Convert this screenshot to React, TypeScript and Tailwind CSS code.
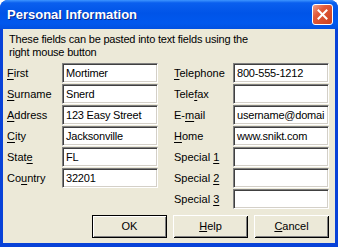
import React from "react";

const font = { fontFamily: '"Liberation Sans", Arial, sans-serif' };

function Field({ value }: { value?: string }) {
  return (
    <div className="h-[20px] w-[96px] border-t border-l border-t-[#808080] border-l-[#808080] border-b border-r border-b-white border-r-white shadow-[inset_1px_1px_0_#404040,inset_-1px_-1px_0_#d4d0c8] bg-white pl-[3px] pr-[2px] overflow-hidden whitespace-nowrap text-[11px] tracking-[-0.2px] leading-[18px] text-black">
      {value}
    </div>
  );
}

function Label({ pre, u, post, w }: { pre?: string; u: string; post?: string; w: string }) {
  return (
    <div className={`${w} text-[11px] leading-[20px] text-black whitespace-nowrap`}>
      {pre}
      <u className="underline-offset-[2px]">{u}</u>
      {post}
    </div>
  );
}

function Btn({ children, def }: { children: React.ReactNode; def?: boolean }) {
  return (
    <div
      className={
        "w-[75px] h-[23px] flex items-center justify-center text-[11px] text-black bg-[#ece9d8] " +
        (def
          ? "border border-black shadow-[inset_1px_1px_0_#fff,inset_-1px_-1px_0_#808080]"
          : "shadow-[inset_1px_1px_0_#fff,inset_-1px_-1px_0_#000,inset_2px_2px_0_#ece9d8,inset_-2px_-2px_0_#808080]")
      }
    >
      {children}
    </div>
  );
}

export default function App() {
  const left: [string | undefined, string, string | undefined, string][] = [
    [undefined, "F", "irst", "Mortimer"],
    [undefined, "S", "urname", "Snerd"],
    [undefined, "A", "ddress", "123 Easy Street"],
    [undefined, "C", "ity", "Jacksonville"],
    ["Stat", "e", undefined, "FL"],
    ["Co", "u", "ntry", "32201"],
  ];
  const right: [string | undefined, string, string | undefined, string][] = [
    [undefined, "T", "elephone", "800-555-1212"],
    ["Tele", "f", "ax", ""],
    ["E-", "m", "ail", "username@domai"],
    [undefined, "H", "ome", "www.snikt.com"],
    ["Special ", "1", undefined, ""],
    ["Special ", "2", undefined, ""],
    ["Special ", "3", undefined, ""],
  ];
  return (
    <div className="w-[338px] h-[247px] bg-white" style={font}>
      <div className="w-[338px] h-[247px] rounded-t-[8px] bg-[#0842d8] flex flex-col overflow-hidden">
        <div className="h-[29px] flex items-center justify-between pl-[7px] pr-[5px] bg-[linear-gradient(to_bottom,#3d95ff_0%,#0a5fee_10%,#0054e8_45%,#0058ee_80%,#0150e0_100%)]">
          <div className="text-white font-bold text-[13px] [text-shadow:1px_1px_0_#0a2a90]">Personal Information</div>
          <div className="w-[21px] h-[21px] rounded-[3px] border border-white bg-[linear-gradient(135deg,#f0a08a_0%,#e25a3a_35%,#c9401f_100%)] flex items-center justify-center">
            <svg width="11" height="11" viewBox="0 0 11 11">
              <path d="M1.5 1.5 L9.5 9.5 M9.5 1.5 L1.5 9.5" stroke="white" strokeWidth="2" strokeLinecap="square" />
            </svg>
          </div>
        </div>
        <div className="flex-1 mx-[3px] mb-[4px] bg-[#ece9d8] flex flex-col">
          <div className="pl-[6px] pt-[4px] text-[11px] tracking-[-0.2px] leading-[13px] text-black">
            These fields can be pasted into text fields using the
            <br />
            right mouse button
          </div>
          <div className="flex mt-[4px] pl-[4px]">
            <div className="flex flex-col gap-[1px]">
              {left.map(([a, b, c, v], i) => (
                <div key={i} className="flex items-center">
                  <Label pre={a} u={b} post={c} w="w-[55px]" />
                  <Field value={v} />
                </div>
              ))}
            </div>
            <div className="flex flex-col gap-[1px] ml-[16px]">
              {right.map(([a, b, c, v], i) => (
                <div key={i} className="flex items-center">
                  <Label pre={a} u={b} post={c} w="w-[59px]" />
                  <Field value={v} />
                </div>
              ))}
            </div>
          </div>
          <div className="flex justify-end gap-[6px] mt-[6px] pr-[6px]">
            <Btn def>OK</Btn>
            <Btn>
              <u>H</u>elp
            </Btn>
            <Btn>
              <u>C</u>ancel
            </Btn>
          </div>
        </div>
      </div>
    </div>
  );
}
